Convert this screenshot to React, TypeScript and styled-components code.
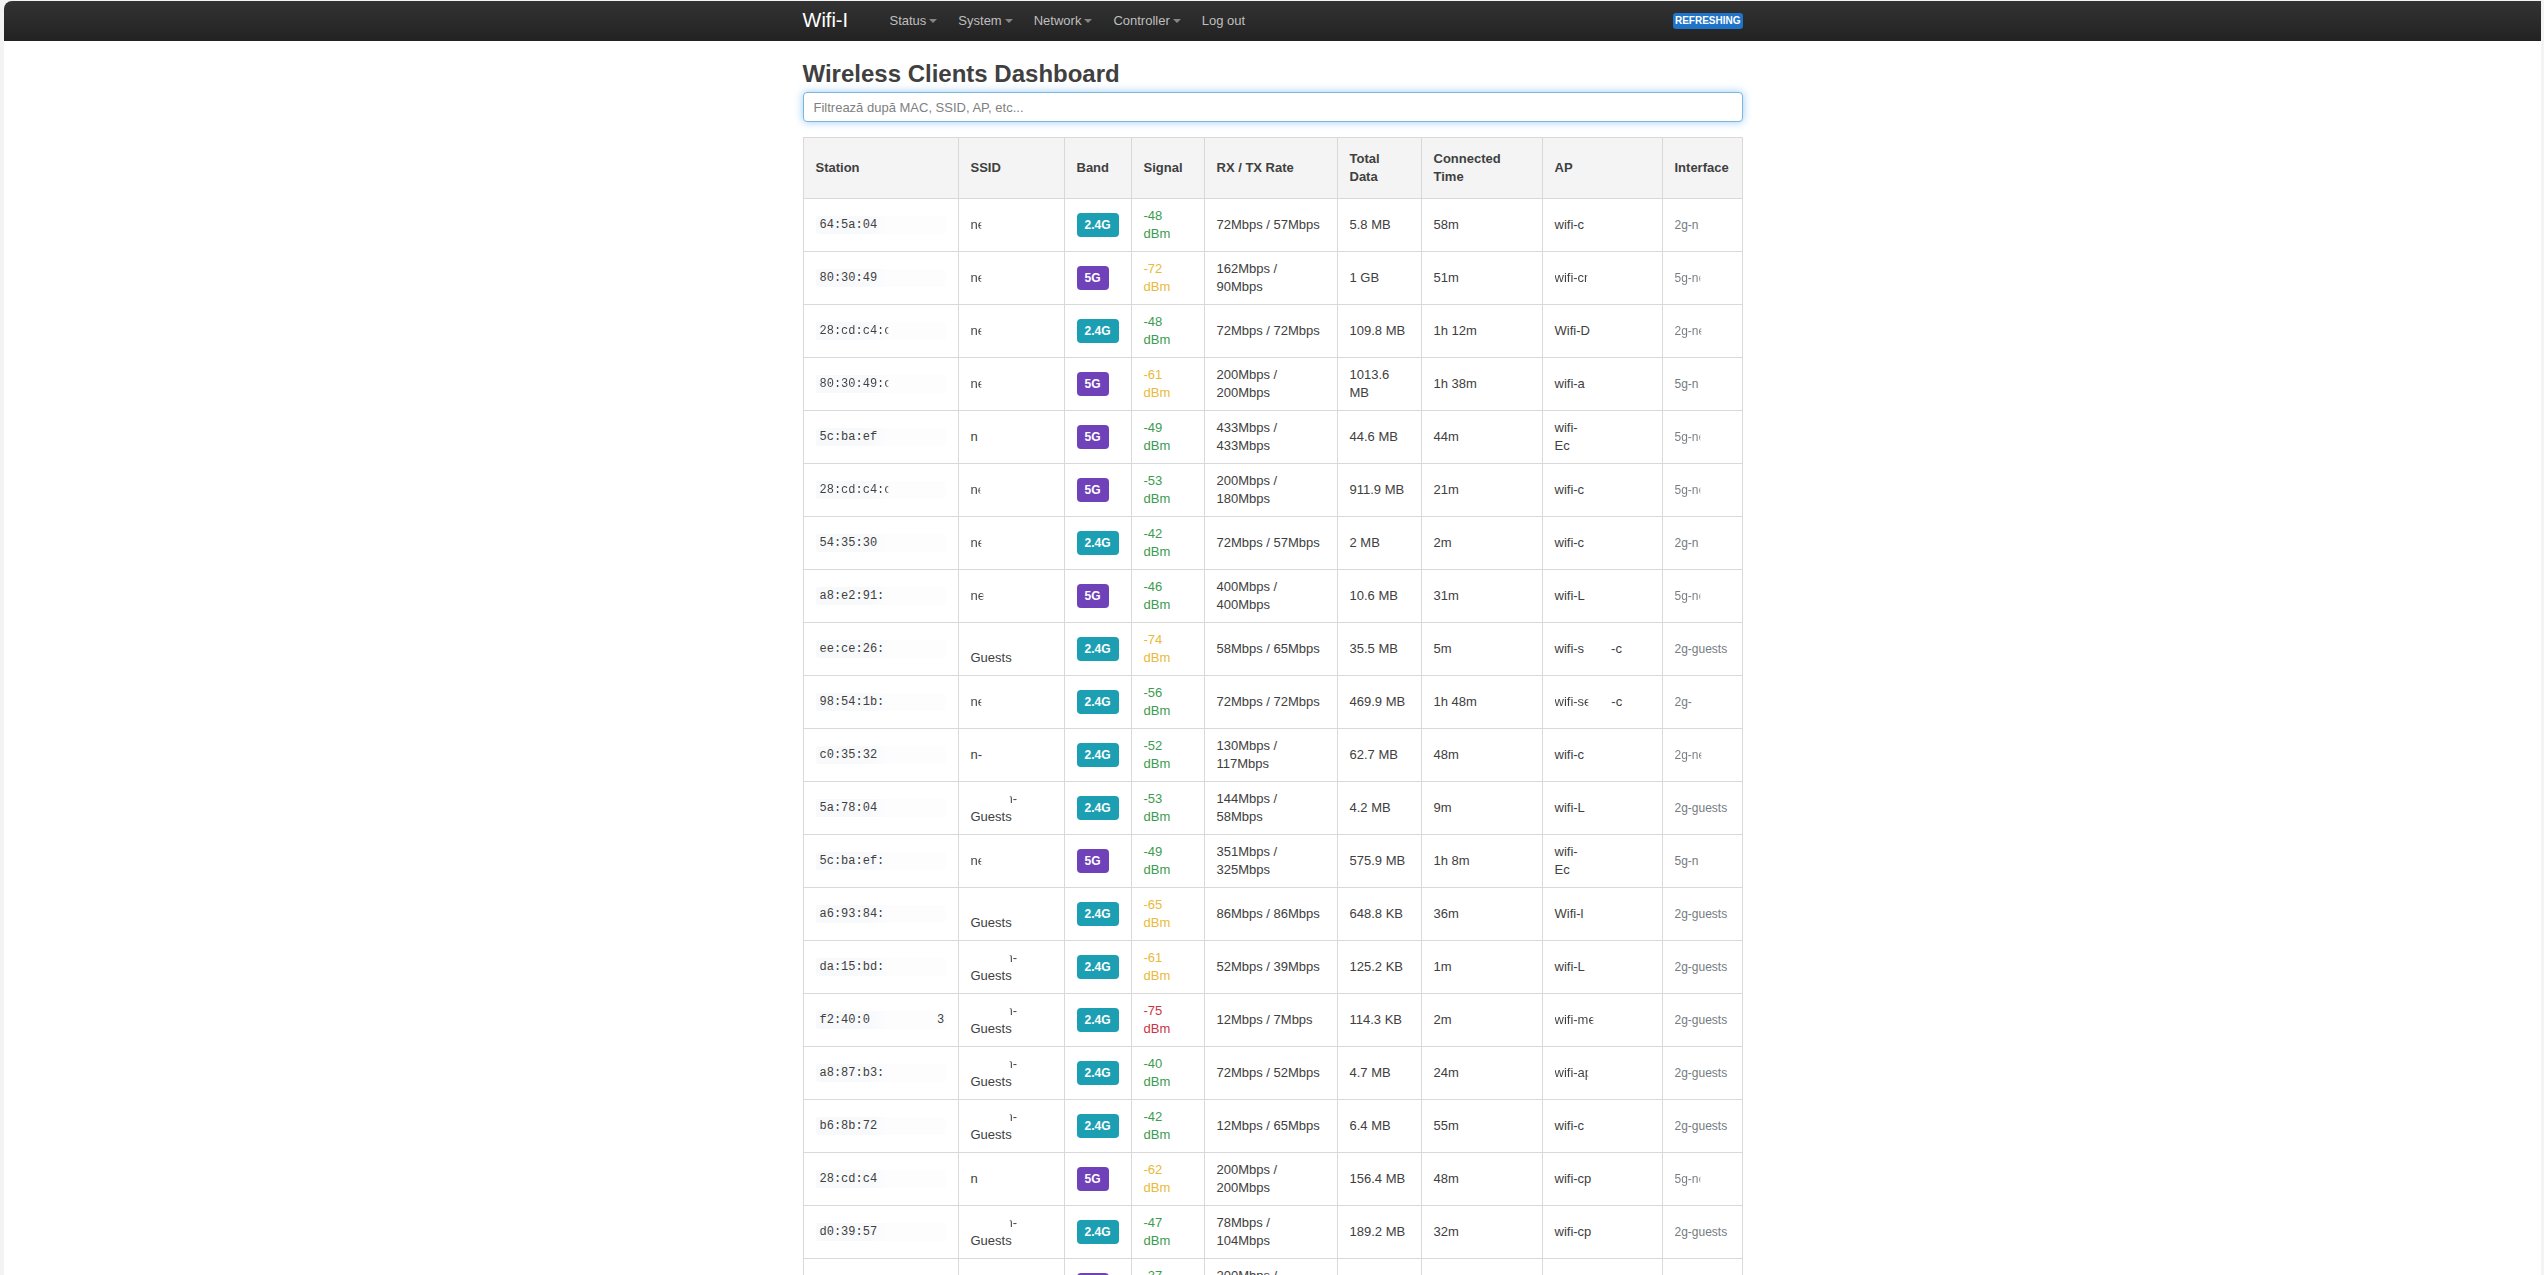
import React, { useState } from "react";
import styled, { createGlobalStyle } from "styled-components";

const GlobalStyle = createGlobalStyle`
  * { box-sizing: border-box; }
  html { background: #f3f3f3; }
  body {
    margin: 0;
    font-family: "Liberation Sans", Arial, sans-serif;
    font-size: 13px;
    line-height: 18px;
    color: #404040;
    overflow: hidden;
  }
`;

const Frame = styled.div`
  height: 100vh;
  padding: 1px 3px 0 4px;
  overflow: hidden;
`;

const Page = styled.div`
  min-height: 100%;
  background: #fff;
  border-top-left-radius: 8px;
  overflow: hidden;
`;

const Container = styled.div`
  width: 100%;
  max-width: 940px;
  margin: 0 auto;
`;

const TopBar = styled.header`
  height: 40px;
  background: linear-gradient(#333, #222);
`;

const TopBarInner = styled(Container)`
  height: 100%;
  display: flex;
  align-items: center;
`;

const Brand = styled.a`
  width: 76px;
  padding-bottom: 2px;
  font-size: 20px;
  line-height: 20px;
  color: #fff;
  text-decoration: none;
  white-space: nowrap;
`;

const Menu = styled.nav`
  display: flex;
  flex: 1;
`;

const MenuLink = styled.a`
  display: flex;
  align-items: center;
  gap: 3px;
  padding: 10px 10px 10px 11px;
  color: #bfbfbf;
  text-decoration: none;
`;

const Caret = styled.span`
  border: 4px solid transparent;
  border-top-color: #868686;
  border-bottom: 0;
`;

const Refreshing = styled.button`
  padding: 1px 2px 2px;
  border: 0;
  border-radius: 3px;
  background: #1f74c9;
  color: #fff;
  font: bold 10px/13px "Liberation Sans", Arial, sans-serif;
  text-transform: uppercase;
`;

const Title = styled.h2`
  margin: 15px 0 0;
  font-size: 24px;
  line-height: 36px;
`;

const Filter = styled.input`
  display: block;
  width: 100%;
  height: 30px;
  margin-bottom: 15px;
  padding: 4px 10px;
  border: 1px solid #7db5dc;
  border-radius: 4px;
  box-shadow: 0 0 8px rgba(82, 168, 236, 0.6);
  background: #fff;
  font: inherit;
  color: #404040;
  outline: 0;
  &::placeholder { color: #808080; opacity: 1; }
`;

const Table = styled.table`
  width: 100%;
  table-layout: fixed;
  border-spacing: 0;
  border: solid #d9d9d9;
  border-width: 1px 0 0 1px;
`;

const Col = styled.col<{ $w?: number }>`
  width: ${(p) => (p.$w ? `${p.$w}px` : "auto")};
`;

const Th = styled.th`
  padding: 12px;
  border: solid #d9d9d9;
  border-width: 0 1px 1px 0;
  background: #f4f4f4;
  text-align: left;
  vertical-align: middle;
`;

const Td = styled.td`
  height: 53px;
  padding: 8px 12px;
  border: solid #d9d9d9;
  border-width: 0 1px 1px 0;
  vertical-align: middle;
`;

const Mac = styled.code`
  display: block;
  height: 18px;
  padding: 0 4px;
  border-radius: 3px;
  background: linear-gradient(90deg, #f7f9fb 40%, #fdfdfe 56%);
  font: 12px/18px "Liberation Mono", "Courier New", monospace;
`;

/* Text whose ink vanishes past a given width */
const Faded = styled.span<{ $show: number }>`
  display: inline-block;
  white-space: nowrap;
  background: linear-gradient(
    90deg,
    currentColor ${(p) => p.$show - 1}px,
    transparent ${(p) => p.$show + 1}px
  );
  background-clip: text;
  -webkit-text-fill-color: transparent;
`;

/* First line of a guest network name: only its last characters are visible */
const HiddenLine = styled.span`
  display: block;
  height: 18px;
  padding-left: 35px;
  background: linear-gradient(90deg, transparent 38px, currentColor 40px);
  background-clip: text;
  -webkit-text-fill-color: transparent;
`;

const Band = styled.span<{ $fast: boolean }>`
  display: inline-block;
  padding: 3px 8px;
  border-radius: 4px;
  background: ${(p) => (p.$fast ? "#6f42b9" : "#1c9fb3")};
  color: #fff;
  font-size: 12px;
  font-weight: bold;
  vertical-align: middle;
`;

const levels = { good: "#3c9b50", fair: "#e9b93a", poor: "#cb3444" };

const Signal = styled.span<{ $level: keyof typeof levels }>`
  display: block;
  width: 30px;
  color: ${(p) => levels[p.$level]};
`;

const Iface = styled.span`
  font-size: 12px;
  color: #757b80;
`;

const Split = styled.span<{ $gap: number }>`
  display: flex;
  gap: ${(p) => p.$gap}px;
`;

type Part = [text: string, show?: number];

interface Client {
  mac: Part;
  tail?: string;
  ssid: Part;
  guests?: boolean;
  fast?: boolean;
  signal: number;
  rate: string;
  data: string;
  time: string;
  ap: Part;
  apTail?: string;
  iface: Part;
}

const g: Part = ["2g-guests"];

const clients: Client[] = [
  { mac: ["64:5a:04"], ssid: ["ne", 10], signal: -48, rate: "72Mbps / 57Mbps", data: "5.8 MB", time: "58m", ap: ["wifi-c"], iface: ["2g-n"] },
  { mac: ["80:30:49"], ssid: ["ne", 10], fast: true, signal: -72, rate: "162Mbps / 90Mbps", data: "1 GB", time: "51m", ap: ["wifi-cr", 32], iface: ["5g-ne", 25] },
  { mac: ["28:cd:c4:c", 68], ssid: ["ne", 10], signal: -48, rate: "72Mbps / 72Mbps", data: "109.8 MB", time: "1h 12m", ap: ["Wifi-D"], iface: ["2g-ne", 26] },
  { mac: ["80:30:49:c", 68], ssid: ["ne", 10], fast: true, signal: -61, rate: "200Mbps / 200Mbps", data: "1013.6 MB", time: "1h 38m", ap: ["wifi-a"], iface: ["5g-n"] },
  { mac: ["5c:ba:ef"], ssid: ["n"], fast: true, signal: -49, rate: "433Mbps / 433Mbps", data: "44.6 MB", time: "44m", ap: ["wifi- Ec"], iface: ["5g-ne", 25] },
  { mac: ["28:cd:c4:c", 68], ssid: ["ne", 9], fast: true, signal: -53, rate: "200Mbps / 180Mbps", data: "911.9 MB", time: "21m", ap: ["wifi-c"], iface: ["5g-ne", 25] },
  { mac: ["54:35:30"], ssid: ["ne", 10], signal: -42, rate: "72Mbps / 57Mbps", data: "2 MB", time: "2m", ap: ["wifi-c"], iface: ["2g-n"] },
  { mac: ["a8:e2:91:"], ssid: ["ne", 12], fast: true, signal: -46, rate: "400Mbps / 400Mbps", data: "10.6 MB", time: "31m", ap: ["wifi-L"], iface: ["5g-ne", 25] },
  { mac: ["ee:ce:26:"], ssid: [""], guests: true, signal: -74, rate: "58Mbps / 65Mbps", data: "35.5 MB", time: "5m", ap: ["wifi-s"], apTail: "-c", iface: g },
  { mac: ["98:54:1b:"], ssid: ["ne", 10], signal: -56, rate: "72Mbps / 72Mbps", data: "469.9 MB", time: "1h 48m", ap: ["wifi-se", 33], apTail: "-c", iface: ["2g-"] },
  { mac: ["c0:35:32"], ssid: ["n-"], signal: -52, rate: "130Mbps / 117Mbps", data: "62.7 MB", time: "48m", ap: ["wifi-c"], iface: ["2g-ne", 26] },
  { mac: ["5a:78:04"], ssid: ["n-"], guests: true, signal: -53, rate: "144Mbps / 58Mbps", data: "4.2 MB", time: "9m", ap: ["wifi-L"], iface: g },
  { mac: ["5c:ba:ef:"], ssid: ["ne", 10], fast: true, signal: -49, rate: "351Mbps / 325Mbps", data: "575.9 MB", time: "1h 8m", ap: ["wifi- Ec"], iface: ["5g-n"] },
  { mac: ["a6:93:84:"], ssid: [""], guests: true, signal: -65, rate: "86Mbps / 86Mbps", data: "648.8 KB", time: "36m", ap: ["Wifi-l"], iface: g },
  { mac: ["da:15:bd:"], ssid: ["n-"], guests: true, signal: -61, rate: "52Mbps / 39Mbps", data: "125.2 KB", time: "1m", ap: ["wifi-L"], iface: g },
  { mac: ["f2:40:0"], tail: "3", ssid: ["n-"], guests: true, signal: -75, rate: "12Mbps / 7Mbps", data: "114.3 KB", time: "2m", ap: ["wifi-me", 38], iface: g },
  { mac: ["a8:87:b3:"], ssid: ["n-"], guests: true, signal: -40, rate: "72Mbps / 52Mbps", data: "4.7 MB", time: "24m", ap: ["wifi-ap", 33], iface: g },
  { mac: ["b6:8b:72"], ssid: ["n-"], guests: true, signal: -42, rate: "12Mbps / 65Mbps", data: "6.4 MB", time: "55m", ap: ["wifi-c"], iface: g },
  { mac: ["28:cd:c4"], ssid: ["n"], fast: true, signal: -62, rate: "200Mbps / 200Mbps", data: "156.4 MB", time: "48m", ap: ["wifi-cp"], iface: ["5g-ne", 25] },
  { mac: ["d0:39:57"], ssid: ["n-"], guests: true, signal: -47, rate: "78Mbps / 104Mbps", data: "189.2 MB", time: "32m", ap: ["wifi-cp"], iface: g },
  { mac: [""], ssid: [""], fast: true, signal: -37, rate: "200Mbps / 200Mbps", data: "", time: "", ap: [""], iface: [""] },
];

const columns: [string, number?][] = [
  ["Station", 155],
  ["SSID", 106],
  ["Band", 67],
  ["Signal", 73],
  ["RX / TX Rate", 133],
  ["Total Data", 84],
  ["Connected Time", 121],
  ["AP", 120],
  ["Interface"],
];

const menu = ["Status", "System", "Network", "Controller"];

function Partial({ part: [text, show] }: { part: Part }) {
  return show ? <Faded $show={show}>{text}</Faded> : <>{text}</>;
}

function ApName({ part, tail }: { part: Part; tail?: string }) {
  const [first, second] = part[0].split(" ");
  if (second) {
    return (
      <>
        {first}
        <br />
        {second}
      </>
    );
  }
  if (tail) {
    return (
      <Split $gap={part[1] ? 20 : 27}>
        <span><Partial part={part} /></span>
        <span>{tail}</span>
      </Split>
    );
  }
  return <Partial part={part} />;
}

function levelOf(dbm: number): keyof typeof levels {
  if (dbm > -60) return "good";
  return dbm > -75 ? "fair" : "poor";
}

function ClientRow({ c }: { c: Client }) {
  return (
    <tr>
      <Td>
        <Mac>
          {c.tail ? (
            <Split $gap={67}>
              <span>{c.mac[0]}</span>
              <span>{c.tail}</span>
            </Split>
          ) : (
            <Partial part={c.mac} />
          )}
        </Mac>
      </Td>
      <Td>
        {c.guests ? (
          <>
            <HiddenLine>{c.ssid[0]}</HiddenLine>
            Guests
          </>
        ) : (
          <Partial part={c.ssid} />
        )}
      </Td>
      <Td><Band $fast={!!c.fast}>{c.fast ? "5G" : "2.4G"}</Band></Td>
      <Td><Signal $level={levelOf(c.signal)}>{c.signal} dBm</Signal></Td>
      <Td>{c.rate}</Td>
      <Td>{c.data}</Td>
      <Td>{c.time}</Td>
      <Td><ApName part={c.ap} tail={c.apTail} /></Td>
      <Td><Iface><Partial part={c.iface} /></Iface></Td>
    </tr>
  );
}

export default function App() {
  const [query, setQuery] = useState("");
  const q = query.toLowerCase();
  const rows = clients.filter((c) =>
    [c.mac[0], c.ssid[0], c.ap[0], c.iface[0]].join(" ").toLowerCase().includes(q)
  );
  return (
    <Frame>
      <GlobalStyle />
      <Page>
        <TopBar>
          <TopBarInner>
            <Brand href="#">Wifi-I</Brand>
            <Menu>
              {menu.map((m) => (
                <MenuLink href="#" key={m}>{m}<Caret /></MenuLink>
              ))}
              <MenuLink href="#">Log out</MenuLink>
            </Menu>
            <Refreshing type="button">Refreshing</Refreshing>
          </TopBarInner>
        </TopBar>
        <Container as="main">
          <Title>Wireless Clients Dashboard</Title>
          <Filter
            aria-label="Filtrează"
            placeholder="Filtrează după MAC, SSID, AP, etc..."
            value={query}
            onChange={(e) => setQuery(e.target.value)}
          />
          <Table>
            <colgroup>
              {columns.map(([name, w]) => <Col key={name} $w={w} />)}
            </colgroup>
            <thead>
              <tr>{columns.map(([name]) => <Th key={name} scope="col">{name}</Th>)}</tr>
            </thead>
            <tbody>
              {rows.map((c, i) => <ClientRow key={i} c={c} />)}
            </tbody>
          </Table>
        </Container>
      </Page>
    </Frame>
  );
}
